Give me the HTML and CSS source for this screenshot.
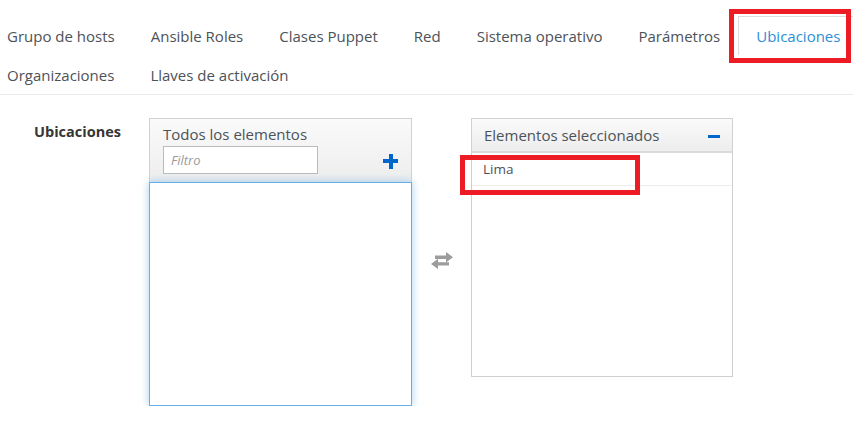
FILE: index.html
```html
<!DOCTYPE html>
<html lang="es">
<head>
<meta charset="utf-8">
<title>Ubicaciones</title>
<link rel="stylesheet" href="styles.css">
</head>
<body>
<ul class="tabs">
  <li class="tab"><a>Grupo de hosts</a></li>
  <li class="tab"><a>Ansible Roles</a></li>
  <li class="tab"><a>Clases Puppet</a></li>
  <li class="tab"><a>Red</a></li>
  <li class="tab"><a>Sistema operativo</a></li>
  <li class="tab"><a>Parámetros</a></li>
  <li class="tab active"><a>Ubicaciones</a></li>
  <li class="tab"><a>Organizaciones</a></li>
  <li class="tab"><a>Llaves de activación</a></li>
</ul>

<div class="form-row">
  <label class="label">Ubicaciones</label>
  <div class="panel left">
    <div class="panel-head left-head">
      <div class="title">Todos los elementos</div>
      <div class="filter-row">
        <input class="filter" placeholder="Filtro">
        <span class="plus"></span>
      </div>
    </div>
    <div class="list focused"></div>
  </div>
  <div class="switch">
    <svg width="24" height="17" viewBox="0 0 24 17"><path d="M5 3.5h11V0l7 5.2-7 5.2V7H5z M19 10.2H8V6.8L1 12l7 5v-3.4h11z" fill="#9c9c9c"/></svg>
  </div>
  <div class="panel right">
    <div class="panel-head right-head">
      <div class="title">Elementos seleccionados</div>
      <span class="minus"></span>
    </div>
    <div class="list selected">
      <div class="item">Lima</div>
    </div>
  </div>
</div>

<div class="mark mark-tab"></div>
<div class="mark mark-item"></div>
</body>
</html>
```

FILE: styles.css
```css
html, body {
  margin: 0;
  padding: 0;
  background: #fff;
  font-family: "Open Sans", "Noto Sans", sans-serif;
  color: #4d5258;
  overflow: hidden;
}

.tabs {
  list-style: none;
  margin: 16px 0 0 -11px;
  padding: 0;
  width: 880px;
  display: flex;
  flex-wrap: wrap;
  border-bottom: 1px solid #ebebeb;
}

.tab a {
  display: block;
  padding: 10px 17px 9px;
  line-height: 19px;
  font-size: 15px;
  border: 1px solid transparent;
  border-bottom: 0;
  color: #4d5258;
  white-space: nowrap;
}

.tab.active a {
  border-color: #ddd;
  color: #2a8fd6;
  background: #fff;
}

.form-row {
  display: grid;
  grid-template-columns: 121px 291px 59px 262px;
  margin-top: 23px;
  align-items: start;
}

.label {
  grid-column: 1;
  font-weight: 700;
  font-size: 14.5px;
  color: #363636;
  text-align: right;
  padding-top: 4px;
  line-height: 20px;
}

.panel { grid-row: 1; }
.panel.left { grid-column: 2; margin-left: 28px; }
.switch {
  grid-column: 3;
  display: flex;
  justify-content: center;
  padding-top: 134px;
}
.panel.right { grid-column: 4; }

.panel-head {
  background: linear-gradient(#fafafa, #ededed);
  border: 1px solid #d1d1d1;
  border-bottom: 0;
  box-sizing: border-box;
}

.title {
  font-size: 15px;
  line-height: 20px;
  color: #4d5258;
  white-space: nowrap;
}

.left-head {
  padding: 5px 12px 7px 13px;
  height: 64px;
}

.filter-row {
  display: flex;
  justify-content: space-between;
  align-items: center;
  margin-top: 2px;
}

.filter {
  width: 155px;
  height: 28px;
  box-sizing: border-box;
  border: 1px solid #bbb;
  padding: 0 7px;
  font-family: "Open Sans", sans-serif;
  font-size: 13px;
  font-style: italic;
  color: #999;
  background: #fff;
  outline: none;
}
.filter::placeholder { color: #9a9a9a; font-style: italic; }

.plus {
  width: 15px;
  height: 15px;
  position: relative;
  margin-right: 1px;
  margin-top: 2px;
}
.plus::before, .plus::after {
  content: "";
  position: absolute;
  background: #0066cc;
}
.plus::before { left: 0; top: 5.5px; width: 15px; height: 4px; }
.plus::after { top: 0; left: 5.5px; width: 4px; height: 15px; }

.right-head {
  height: 35px;
  padding: 5px 12px 0 12px;
  display: flex;
  justify-content: space-between;
  align-items: flex-start;
  border-bottom: 2px solid #dadada;
}
.right-head .title { line-height: 22px; }
.minus {
  width: 12px;
  height: 3px;
  background: #0066cc;
  margin-top: 11px;
}

.list {
  box-sizing: border-box;
  background: #fff;
}

.list.focused {
  height: 224px;
  border: 1px solid #66afe9;
  box-shadow: 0 0 8px rgba(102, 175, 233, 0.6);
}

.list.selected {
  height: 224px;
  border: 1px solid #cfcfcf;
  border-top: 0;
}

.item {
  font-size: 13.5px;
  line-height: 32px;
  padding-left: 11px;
  border-bottom: 1px solid #ededed;
  color: #4d5258;
}

.mark {
  position: absolute;
  border: 5px solid #ed1c24;
  box-sizing: border-box;
}
.mark-tab { left: 729px; top: 9px; width: 122px; height: 54px; }
.mark-item { left: 460px; top: 155px; width: 180px; height: 40px; }
```
